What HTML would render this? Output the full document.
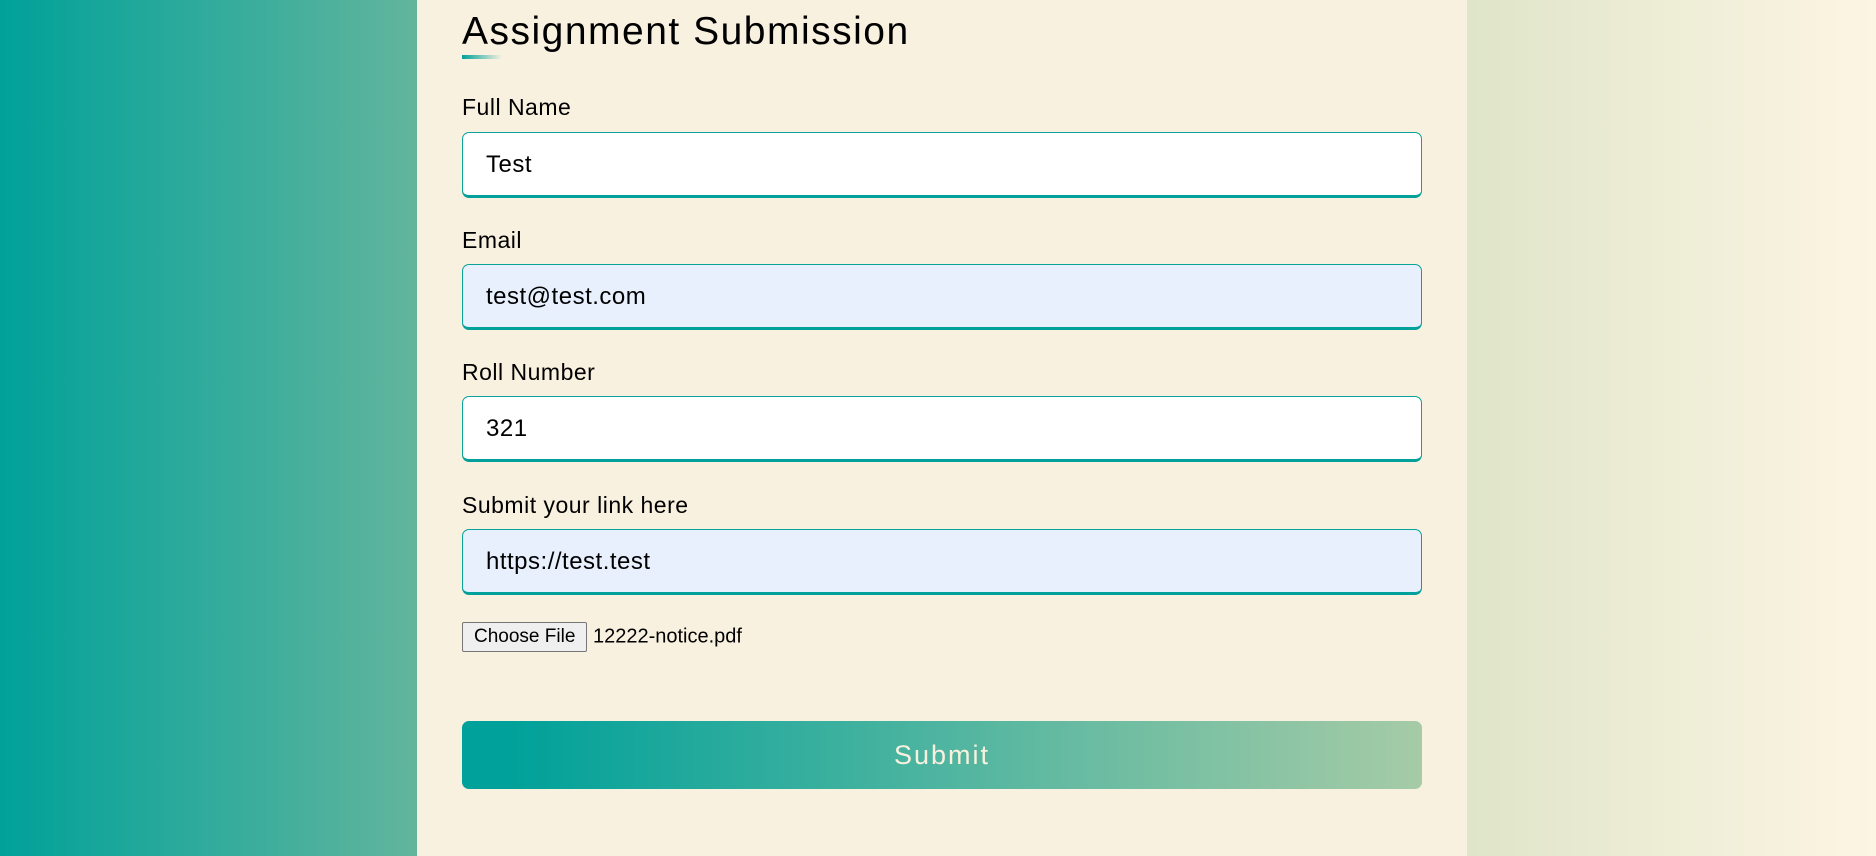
<!DOCTYPE html>
<html><head><meta charset="utf-8">
<style>
html,body{margin:0;padding:0;}
body{width:1876px;height:856px;overflow:hidden;font-family:"Liberation Sans",sans-serif;
background:linear-gradient(90deg,#00a19a 0%,#62b59d 22.2%,#dfe5c9 78.2%,#fdf5e3 100%);position:relative;}
.panel{position:absolute;left:417px;top:0;width:1050px;height:856px;background:#f9f1df;}
h1{position:absolute;left:45px;top:10px;margin:0;font-weight:400;font-size:39px;letter-spacing:1.5px;color:#000;}
.ul{position:absolute;left:45px;top:55px;width:40px;height:4px;background:linear-gradient(90deg,#00a19a,#f9f1df);}
.lbl{position:absolute;left:45px;font-size:23px;color:#000;letter-spacing:0.5px;}
.in{position:absolute;left:45px;width:960px;height:66px;box-sizing:border-box;border:1px solid #0aa39c;border-bottom:3px solid #00a19a;border-radius:7px;background:#fff;font-size:24px;padding-left:23px;line-height:64px;color:#000;letter-spacing:0.5px;}
.blue{background:#e8f0fe;}
.file{position:absolute;left:45px;top:622px;font-size:20px;}
.fb{display:inline-block;border:1px solid #767676;background:#efefef;border-radius:2px;font-size:19px;padding:2px 11px;height:30px;box-sizing:border-box;line-height:24px;vertical-align:middle;}
.btn{position:absolute;left:45px;top:721px;width:960px;height:68px;border-radius:7px;background:linear-gradient(90deg,#00a19a 5%,#a6cba6);color:#f9f1df;font-size:27px;text-align:center;line-height:68px;letter-spacing:2px;}
</style></head><body>
<div class="panel">
<h1>Assignment Submission</h1>
<div class="ul"></div>
<div class="lbl" style="top:94px">Full Name</div>
<div class="in" style="top:132px">Test</div>
<div class="lbl" style="top:227px">Email</div>
<div class="in blue" style="top:264px">test@test.com</div>
<div class="lbl" style="top:359px">Roll Number</div>
<div class="in" style="top:396px">321</div>
<div class="lbl" style="top:492px">Submit your link here</div>
<div class="in blue" style="top:529px">https://test.test</div>
<div class="file"><span class="fb">Choose File</span> <span style="vertical-align:middle">12222-notice.pdf</span></div>
<div class="btn">Submit</div>
</div>
</body></html>
